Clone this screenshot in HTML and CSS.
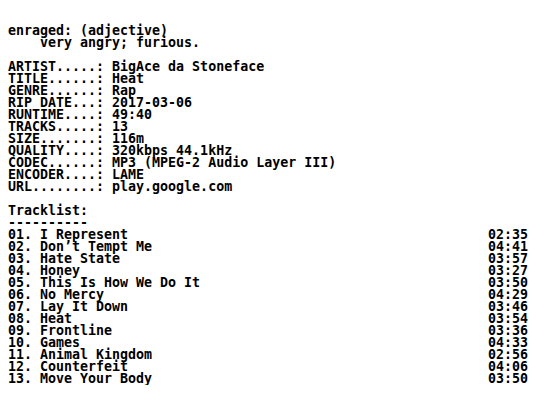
FILE: index.html
```html
<!DOCTYPE html>
<html lang="en">
<head>
<meta charset="utf-8">
<title>BigAce da Stoneface - Heat</title>
<link rel="stylesheet" href="styles.css">
</head>
<body>
<main class="nfo">
  <section class="definition">
    <div class="line">enraged: (adjective)</div>
    <div class="line indent">very angry; furious.</div>
  </section>

  <section class="info">
    <div class="row"><span class="label">ARTIST.....:</span><span class="value">BigAce da Stoneface</span></div>
    <div class="row"><span class="label">TITLE......:</span><span class="value">Heat</span></div>
    <div class="row"><span class="label">GENRE......:</span><span class="value">Rap</span></div>
    <div class="row"><span class="label">RIP DATE...:</span><span class="value">2017-03-06</span></div>
    <div class="row"><span class="label">RUNTIME....:</span><span class="value">49:40</span></div>
    <div class="row"><span class="label">TRACKS.....:</span><span class="value">13</span></div>
    <div class="row"><span class="label">SIZE.......:</span><span class="value">116m</span></div>
    <div class="row"><span class="label">QUALITY....:</span><span class="value">320kbps 44.1kHz</span></div>
    <div class="row"><span class="label">CODEC......:</span><span class="value">MP3 (MPEG-2 Audio Layer III)</span></div>
    <div class="row"><span class="label">ENCODER....:</span><span class="value">LAME</span></div>
    <div class="row"><span class="label">URL........:</span><span class="value">play.google.com</span></div>
  </section>

  <section class="tracklist">
    <div class="line">Tracklist:</div>
    <div class="line">----------</div>
    <ol class="tracks">
      <li class="track"><span>01. I Represent</span><span>02:35</span></li>
      <li class="track"><span>02. Don’t Tempt Me</span><span>04:41</span></li>
      <li class="track"><span>03. Hate State</span><span>03:57</span></li>
      <li class="track"><span>04. Honey</span><span>03:27</span></li>
      <li class="track"><span>05. This Is How We Do It</span><span>03:50</span></li>
      <li class="track"><span>06. No Mercy</span><span>04:29</span></li>
      <li class="track"><span>07. Lay It Down</span><span>03:46</span></li>
      <li class="track"><span>08. Heat</span><span>03:54</span></li>
      <li class="track"><span>09. Frontline</span><span>03:36</span></li>
      <li class="track"><span>10. Games</span><span>04:33</span></li>
      <li class="track"><span>11. Animal Kingdom</span><span>02:56</span></li>
      <li class="track"><span>12. Counterfeit</span><span>04:06</span></li>
      <li class="track"><span>13. Move Your Body</span><span>03:50</span></li>
    </ol>
  </section>
</main>
</body>
</html>
```

FILE: styles.css
```css
html, body {
  background: #ffffff;
}

body {
  margin: 8px;
  color: #000000;
  font-family: "DejaVu Sans Mono", "Liberation Mono", monospace;
  font-weight: bold;
  font-size: 13.3px;
  line-height: 12px;
}

.nfo {
  display: flex;
  flex-direction: column;
  gap: 12px;
  padding-top: 17px;
}

.line,
.row,
.track {
  height: 12px;
  white-space: pre;
}

.indent {
  padding-left: 4ch;
}

.row {
  display: flex;
}

.label {
  width: 13ch;
  flex: none;
}

.tracks {
  list-style: none;
  margin: 0;
  padding: 0;
}

.track {
  display: flex;
  justify-content: space-between;
}
```
